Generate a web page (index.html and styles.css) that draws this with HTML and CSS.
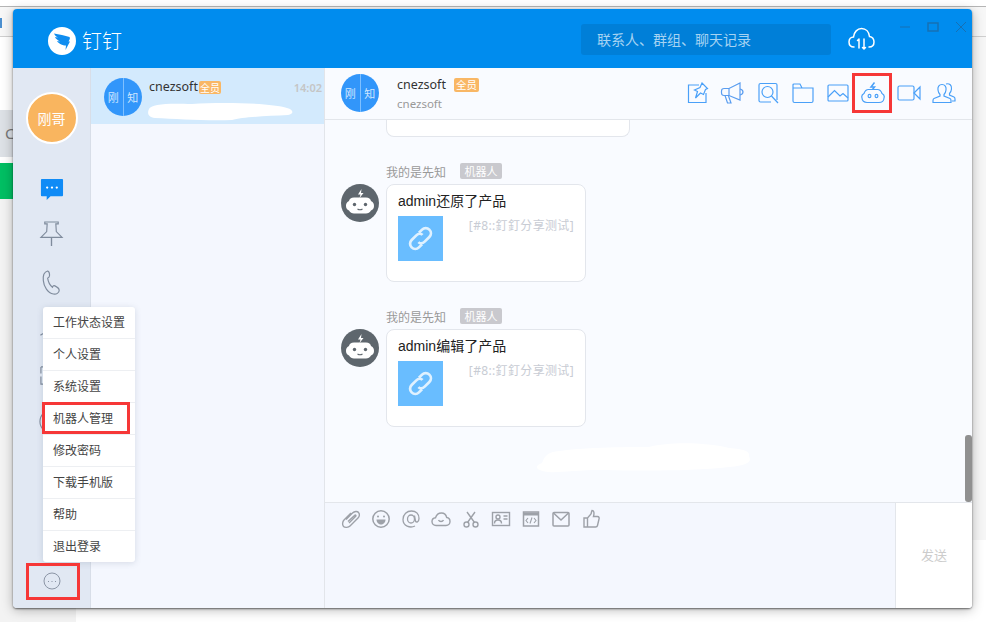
FILE: index.html
```html
<!DOCTYPE html>
<html lang="zh">
<head>
<meta charset="utf-8">
<title>钉钉</title>
<link rel="stylesheet" href="styles.css">
</head>
<body>
<div class="desktop">
  <div class="bg-top-line"></div>
  <div class="bg-band"></div>
  <div class="bg-tick"></div>
  <div class="bg-grey">C</div>
  <div class="bg-green"></div>
  <div class="bg-left"></div>
  <div class="bg-right"></div>

  <div class="window">
    <header class="titlebar">
      <div class="brand">
        <svg class="logo" viewBox="0 0 28 28"><circle cx="14" cy="14" r="14" fill="#fff"/><path d="M6 6.500 C11 7.500 17 8.500 21.500 10 C22.500 11 21.500 13 20.500 14.500 L22 14.500 L17.500 23 L18 18.500 C14.500 18.500 10.500 16.500 9 14 L12 14.500 C9.500 13 7.500 11.500 7 10 L10 10.500 C8 9.500 6.500 8 6 6.500 Z" fill="#0f8df0"/></svg>
        <span class="brand-name">钉钉</span>
      </div>
      <div class="search">联系人、群组、聊天记录</div>
      <svg class="cloud" viewBox="0 0 27 24" fill="none" stroke="#fff" stroke-width="1.500" stroke-linecap="round"><path d="M6 20 C2.500 20 1 17.500 1 15 C1 12 3 10 5.500 10 C6 5 9.500 1.500 13.500 1.500 C18 1.500 21 5 21.500 9.500 C24 10 26 12 26 15 C26 18 24 20 21 20"/><path d="M11 12 V21 M9.500 13.500 L11 12 M16 12 V22 M14.500 20.500 L16 22 L17.500 20.500"/></svg>
      <div class="winctl">
        <svg class="ctl-min" viewBox="0 0 12 12"><path d="M1 6 H11" stroke="#1670b4" stroke-width="1"/></svg>
        <svg class="ctl-max" viewBox="0 0 12 12"><rect x="1" y="2" width="10" height="8" fill="none" stroke="#1670b4" stroke-width="1.500"/></svg>
        <svg class="ctl-close" viewBox="0 0 12 12"><path d="M1 1 L11 11 M11 1 L1 11" stroke="#1670b4" stroke-width="1"/></svg>
      </div>
    </header>

    <div class="main">
      <nav class="sidebar">
        <div class="me"><span>刚哥</span></div>
        <div class="nav-icons">
          <div class="nav-item"><svg class="nav-svg" viewBox="0 0 26 26"><path d="M2 4 Q2 3 3 3 H24 Q25 3 25 4 V20 Q25 21 24 21 H12 L8 25 L8 21 H3 Q2 21 2 20 Z" fill="#0f8bf6"/><circle cx="8.500" cy="12" r="1.200" fill="#fff"/><circle cx="13.500" cy="12" r="1.200" fill="#fff"/><circle cx="18.500" cy="12" r="1.200" fill="#fff"/></svg></div>
          <div class="nav-item nav-up"><svg class="nav-svg" viewBox="0 0 26 26" fill="none" stroke="#7f8b9c" stroke-width="1.200"><path d="M6 1 H20 V3 H17.500 L18 11 L24 17 H2 L8 11 L8.500 3 H6 Z"/><path d="M13 17 V26" stroke-width="1.400"/></svg></div>
          <div class="nav-item"><svg class="nav-svg" viewBox="0 0 26 26" fill="none" stroke="#7f8b9c" stroke-width="1.200"><path d="M9 1 C5 2 4 6 4.500 11 C5 17 9 24 15 25 C18 25.500 21 24 21 21 C21 19 18.500 17.500 16.500 16.500 C15.500 16 14.500 16.500 14 18 C11.500 16 9.500 12 9 8.500 C10 8 11 7 11 5.500 C11 3.500 10.500 1.500 9 1 Z"/></svg></div>
          <div class="nav-item"><svg class="nav-svg" viewBox="0 0 26 26" fill="none" stroke="#7f8b9c" stroke-width="1.200"><path d="M1.500 19 C2.500 18 3.500 17.500 5 17 C8 16 10 15 13 15"/><circle cx="13" cy="9" r="5"/></svg></div>
          <div class="nav-item"><svg class="nav-svg" viewBox="0 0 26 26" fill="none" stroke="#7f8b9c" stroke-width="1.200"><path d="M2 3 V10 M2 13 V21 H24 V3 H2"/></svg></div>
          <div class="nav-item"><svg class="nav-svg" viewBox="0 0 26 26" fill="none" stroke="#7f8b9c" stroke-width="1.200"><circle cx="13" cy="11" r="12"/></svg></div>
        </div>
        <div class="more">
          <svg class="more-svg" viewBox="0 0 18 18" fill="none"><circle cx="9" cy="9" r="8" stroke="#8b95a5" stroke-width="1"/><path d="M5 9.500 H6 M8.500 9.500 H9.500 M12 9.500 H13" stroke="#8b95a5" stroke-width="1"/></svg>
        </div>
      </nav>

      <aside class="convlist">
        <div class="conv">
          <div class="dual"><span>刚</span><span>知</span></div>
          <div class="conv-body">
            <div class="conv-top">
              <span class="conv-name">cnezsoft</span><span class="badge badge-conv">全员</span>
              <span class="conv-time">14:02</span>
            </div>
          </div>
        </div>
      </aside>

      <section class="chat">
        <div class="chat-head">
          <div class="dual"><span>刚</span><span>知</span></div>
          <div class="chat-title">
            <div class="chat-title-top"><span class="chat-name">cnezsoft</span><span class="badge badge-head">全员</span></div>
            <div class="chat-sub">cnezsoft</div>
          </div>
          <div class="tools">
            <svg class="tool" viewBox="0 0 24 24" fill="none" stroke="#4aa0f8" stroke-width="1.200"><path d="M14 4 H3.500 V21.500 H21 V12"/><path d="M17 2 L22.500 7.500 L20.500 8.500 L18.500 13.500 L15.500 12 L10.500 17 L12.500 10.500 L9.500 9 L15 6.500 Z"/></svg>
            <svg class="tool" viewBox="0 0 24 24" fill="none" stroke="#5a9df0" stroke-width="1.200"><path d="M20 2 V19 L9 14.500 H4 C2 14.500 1.500 13 1.500 12 V10 C1.500 8 3 7.500 4 7.500 H9 Z"/><path d="M9 7.500 V14.500 M5 14.500 L7.500 22 H11 L8.500 15 M20 8 C22 8.500 23 9.500 23 11 C23 12.500 22 13.500 20 14"/></svg>
            <svg class="tool" viewBox="0 0 24 24" fill="none" stroke="#4aa0f8" stroke-width="1.200"><path d="M21 19 V4 Q21 2.500 19.500 2.500 H4.500 Q3 2.500 3 4 V19.500 Q3 21 4.500 21 H15"/><circle cx="11.500" cy="11" r="5.500"/><path d="M15.500 15 L22 22"/></svg>
            <svg class="tool" viewBox="0 0 24 24" fill="none" stroke="#4aa0f8" stroke-width="1.200"><path d="M2 4 V20 Q2 21.500 3.500 21.500 H20.500 Q22 21.500 22 20 V7 H11 L9 3 H3 Q2 3 2 4 Z M2 7 H11"/></svg>
            <svg class="tool" viewBox="0 0 24 24" fill="none" stroke="#4aa0f8" stroke-width="1.200"><rect x="2" y="4" width="20" height="16" rx="1"/><path d="M2 16 L8.500 9.500 L14 15 L17 12.500 L22 17"/></svg>
            <svg class="tool" viewBox="0 0 24 24" fill="none" stroke="#4aa0f8" stroke-width="1.200"><path d="M7.500 8.500 H16.500 C19.500 8.500 20.500 11 21 12.500 C23 13.500 23.500 15.500 23 17 C23 19.500 21 21.500 18 21.500 H6 C3 21.500 1 19.500 1 17 C.5 15.500 1 13.500 3 12.500 C3.500 11 4.500 8.500 7.500 8.500 Z"/><path d="M13.500 1.500 L10 6 H13.500 L11.500 8.500" stroke-width="1.500"/><ellipse cx="8.500" cy="15" rx="1.400" ry="1.700"/><ellipse cx="15.500" cy="15" rx="1.400" ry="1.700"/></svg>
            <svg class="tool" viewBox="0 0 24 24" fill="none" stroke="#4aa0f8" stroke-width="1.200"><rect x="1" y="5" width="16" height="14" rx="1.500"/><path d="M17 12 L23 6 V18 Z"/></svg>
            <svg class="tool" viewBox="0 0 24 24" fill="none" stroke="#4aa0f8" stroke-width="1.200"><path d="M10 3.500 C13 3.500 14.500 6 14 9 C13.800 11 13 12.500 12 13.500 V15 L18 17.500 Q19 18 19 19.500 V21.500 H1 V19.500 Q1 18 2 17.500 L8 15 V13.500 C7 12.500 6.200 11 6 9 C5.500 6 7 3.500 10 3.500 Z"/><path d="M14 3 C17.500 2 20 4.500 19.500 8 C19.300 10 18.500 11.500 17.500 12.500 V14 L22 16 Q23 16.500 23 18 V20 H20"/></svg>
          </div>
        </div>

        <div class="messages">
          <div class="cut-bubble"></div>

          <div class="msg">
            <div class="robot-wrap">
              <svg class="robot" viewBox="0 0 38 38"><circle cx="19" cy="19" r="19" fill="#5e666d"/><path d="M13 13.500 H25 C28 13.500 29.500 15 30 17 C32.500 18 33 20 33 22 C33 24 32 26 30 26.500 C29 28.500 27 29.500 25 29.500 H13 C11 29.500 9 28.500 8 26.500 C6 26 5 24 5 22 C5 20 5.500 18 8 17 C8.500 15 10 13.500 13 13.500 Z" fill="#fff"/><path d="M20.500 5 L17 10.500 H19.500 L18.500 14 L22.500 9 H20 Z" fill="#fff"/><circle cx="13.500" cy="20.500" r="1.700" fill="#5e666d"/><circle cx="24.500" cy="20.500" r="1.700" fill="#5e666d"/><path d="M16.500 25 Q19 26.500 21.500 25" fill="none" stroke="#5e666d" stroke-width="1.100"/></svg>
            </div>
            <div class="msg-col">
              <div class="msg-meta"><span class="msg-sender">我的是先知</span><span class="bot-tag">机器人</span></div>
              <div class="bubble">
                <div class="bubble-title">admin还原了产品</div>
                <div class="bubble-row">
                  <div class="link-tile"><svg class="link-svg" viewBox="0 0 24 24" fill="none" stroke="#dff1ff" stroke-width="2.600"><path d="M10.500 6.500 L13.500 3.500 C15.500 1.500 18.500 1.500 20.500 3.500 C22.500 5.500 22.500 8.500 20.500 10.500 L16 15 C14 17 11.500 17 10 15.500"/><path d="M13.500 17.500 L10.500 20.500 C8.500 22.500 5.500 22.500 3.500 20.500 C1.500 18.500 1.500 15.500 3.500 13.500 L8 9 C10 7 12.500 7 14 8.500"/></svg></div>
                  <div class="bubble-ref">[#8::釘釘分享测试]</div>
                </div>
              </div>
            </div>
          </div>

          <div class="msg">
            <div class="robot-wrap">
              <svg class="robot" viewBox="0 0 38 38"><circle cx="19" cy="19" r="19" fill="#5e666d"/><path d="M13 13.500 H25 C28 13.500 29.500 15 30 17 C32.500 18 33 20 33 22 C33 24 32 26 30 26.500 C29 28.500 27 29.500 25 29.500 H13 C11 29.500 9 28.500 8 26.500 C6 26 5 24 5 22 C5 20 5.500 18 8 17 C8.500 15 10 13.500 13 13.500 Z" fill="#fff"/><path d="M20.500 5 L17 10.500 H19.500 L18.500 14 L22.500 9 H20 Z" fill="#fff"/><circle cx="13.500" cy="20.500" r="1.700" fill="#5e666d"/><circle cx="24.500" cy="20.500" r="1.700" fill="#5e666d"/><path d="M16.500 25 Q19 26.500 21.500 25" fill="none" stroke="#5e666d" stroke-width="1.100"/></svg>
            </div>
            <div class="msg-col">
              <div class="msg-meta"><span class="msg-sender">我的是先知</span><span class="bot-tag">机器人</span></div>
              <div class="bubble">
                <div class="bubble-title">admin编辑了产品</div>
                <div class="bubble-row">
                  <div class="link-tile"><svg class="link-svg" viewBox="0 0 24 24" fill="none" stroke="#dff1ff" stroke-width="2.600"><path d="M10.500 6.500 L13.500 3.500 C15.500 1.500 18.500 1.500 20.500 3.500 C22.500 5.500 22.500 8.500 20.500 10.500 L16 15 C14 17 11.500 17 10 15.500"/><path d="M13.500 17.500 L10.500 20.500 C8.500 22.500 5.500 22.500 3.500 20.500 C1.500 18.500 1.500 15.500 3.500 13.500 L8 9 C10 7 12.500 7 14 8.500"/></svg></div>
                  <div class="bubble-ref">[#8::釘釘分享测试]</div>
                </div>
              </div>
            </div>
          </div>

          <div class="scrollbar"></div>
        </div>

        <div class="composer">
          <div class="composer-left">
            <div class="input-tools">
              <svg class="itool" viewBox="0 0 20 20" fill="none" stroke="#9da1a8" stroke-width="1.400"><path d="M5 10.500 L11.500 4 C13.500 2 16.500 2 17.500 3.500 C19 5 18.500 7.500 17 9 L9 17 C7.500 18.500 4 19 2.500 17.500 C1 16 1.500 12.500 3 11 L10 4"/><path d="M7 12.500 L13.500 6.500 C14.500 5.500 15.500 6.500 14.500 7.500 L8 14"/></svg>
              <svg class="itool" viewBox="0 0 20 20" fill="none" stroke="#9da1a8" stroke-width="1.500"><circle cx="10" cy="10" r="8.200"/><circle cx="7" cy="7.500" r="1" fill="#9da1a8" stroke="none"/><circle cx="13" cy="7.500" r="1" fill="#9da1a8" stroke="none"/><path d="M5.500 10.500 H14.500 C14.500 14 12 15.500 10 15.500 C8 15.500 5.500 14 5.500 10.500 Z" fill="#9da1a8" stroke="none"/></svg>
              <svg class="itool" viewBox="0 0 20 20" fill="none" stroke="#9da1a8" stroke-width="1.300"><path d="M14 17 C9 19.500 2 17 2 10.500 C2 5 6 2 10.500 2 C15 2 18 5 18 9.500 C18 13 15 14 14.500 12 L13.500 6.500"/><ellipse cx="10" cy="10" rx="3.500" ry="4"/></svg>
              <svg class="itool" viewBox="0 0 20 20" fill="none" stroke="#9da1a8" stroke-width="1.400"><path d="M5 16.500 C2.500 16.500 1 14.500 1 12.500 C1 10.500 2.500 9 4.500 8.800 C5.500 5.500 8 4 10.500 4 C13 4 15 5.500 15.700 8.500 C17.700 8.800 19 10.500 19 12.500 C19 14.500 17.500 16.500 15 16.500 Z"/><path d="M7.500 11 C8.500 13 11.500 13 12.500 11"/></svg>
              <svg class="itool" viewBox="0 0 20 20" fill="none" stroke="#9da1a8" stroke-width="1.400"><circle cx="5.500" cy="15.500" r="2.500"/><circle cx="14.500" cy="15.500" r="2.500"/><path d="M6.500 13.500 L14 3 M13.500 13.500 L6 3"/></svg>
              <svg class="itool" viewBox="0 0 20 20" fill="none" stroke="#9da1a8" stroke-width="1.400"><rect x="1.500" y="3.500" width="17" height="13"/><circle cx="7" cy="8" r="2"/><path d="M3.500 14.500 C3.500 12 5 11 7 11 C9 11 10.500 12 10.500 14.500 M12.500 7 H16.500 M12.500 10 H16.500"/></svg>
              <svg class="itool" viewBox="0 0 20 20" fill="none" stroke="#9da1a8" stroke-width="1.500"><rect x="2.500" y="3" width="15" height="14"/><path d="M2.500 5 H17.500" stroke-width="3"/><path d="M7 9 L5 11.500 L7 14 M13 9 L15 11.500 L13 14 M11 8.500 L9 14.500" stroke-width="1.100"/></svg>
              <svg class="itool" viewBox="0 0 20 20" fill="none" stroke="#9da1a8" stroke-width="1.500"><rect x="2" y="3.500" width="16" height="13.500" rx="1"/><path d="M2.500 4 L10 11 L17.500 4"/></svg>
              <svg class="itool" viewBox="0 0 20 20" fill="none" stroke="#9da1a8" stroke-width="1.400"><path d="M6.500 9 L10 5 C10.500 3.500 10.500 2.500 11 1.500 C13 1.500 13.500 4 12.500 7.500 H16.500 C18 7.500 18.500 9 18 10 L16.500 16.500 C16.300 17.500 15.500 18 14.500 18 H6.500 V9 H3 V18 H6.500"/></svg>
            </div>
          </div>
          <div class="send">发送</div>
        </div>
      </section>
    </div>
  </div>

  <svg class="scribble scribble-conv" viewBox="0 0 148 22"><path d="M2 9 C4 4 20 3 45 4 C75 2 125 3 140 8 C147 10 147 14 141 15 C120 16 95 17 85 20 C60 21 30 19 8 18 C1 17 0 13 2 9 Z" fill="#fff"/></svg>
  <svg class="scribble scribble-msg" viewBox="0 0 216 32"><path d="M19 10 C40 6 80 5 115 5 C135 0 170 0 195 6 C212 7 216 10 215 14 C218 20 214 23 195 25 C160 29 110 29 70 28 C40 28 25 31 15 30 C2 29 -1 24 8 21 C10 16 12 12 19 10 Z" fill="#fff"/></svg>

  <ul class="menu">
    <li class="menu-item">工作状态设置</li>
    <li class="menu-item">个人设置</li>
    <li class="menu-item">系统设置</li>
    <li class="menu-item">机器人管理</li>
    <li class="menu-item">修改密码</li>
    <li class="menu-item">下载手机版</li>
    <li class="menu-item">帮助</li>
    <li class="menu-item">退出登录</li>
  </ul>

  <div class="redbox redbox-tool"></div>
  <div class="redbox redbox-menu"></div>
  <div class="redbox redbox-more"></div>
</div>
</body>
</html>
```

FILE: styles.css
```css
* { box-sizing: border-box; }
html, body { margin: 0; padding: 0; }
body {
  width: 986px;
  height: 622px;
  overflow: hidden;
  background: #fff;
  font-family: "Noto Sans", "Noto Sans CJK SC", sans-serif;
  font-size: 12px;
  color: #333;
}
.desktop { position: relative; width: 986px; height: 622px; overflow: hidden; }

/* Backdrop behind the window */
.bg-top-line { position: absolute; left: 0; top: 6px; width: 986px; height: 1px; background: #b5b5b5; }
.bg-band { position: absolute; left: 0; top: 7px; width: 986px; height: 30px; background: #f7f7f7; border-bottom: 1px solid #cfcfcf; }
.bg-tick { position: absolute; left: 0; top: 18px; width: 2px; height: 10px; background: #4b8fcf; }
.bg-grey { position: absolute; left: 0; top: 110px; width: 14px; height: 47px; background: #dde1e6; color: #777; font-size: 15px; line-height: 47px; padding-left: 5px; overflow: hidden; }
.bg-green { position: absolute; left: 0; top: 163px; width: 14px; height: 36px; background: #00bf63; }
.bg-left { position: absolute; left: 0; top: 199px; width: 76px; height: 423px; background: #f3f3f3; }
.bg-right { position: absolute; left: 972px; top: 37px; width: 14px; height: 503px; background: #f6f6f6; }

/* Window */
.window {
  position: absolute;
  left: 13px;
  top: 9px;
  width: 959px;
  height: 599px;
  display: flex;
  flex-direction: column;
  border-radius: 4px;
  overflow: hidden;
  background: #f4f7fe;
  box-shadow: 0 1px 2px rgba(0,0,0,.55), 0 2px 12px rgba(0,0,0,.28);
}

/* Title bar */
.titlebar {
  height: 59px;
  flex: none;
  display: flex;
  align-items: center;
  background: #008cee;
  padding-left: 35px;
}
.brand { display: flex; align-items: center; width: 533px; gap: 6px; padding-top: 5px; }
.logo { width: 28px; height: 28px; flex: none; }
.brand-name { color: #fff; font-size: 20px; line-height: 28px; font-weight: 300; font-family: "Noto Sans CJK SC", sans-serif; }
.search {
  width: 250px;
  height: 31px;
  margin-top: 1px;
  border-radius: 3px;
  background: #007fd8;
  color: #a6d3f2;
  font-size: 14px;
  line-height: 31px;
  padding-left: 16px;
  font-family: "Noto Sans CJK SC", sans-serif;
}
.cloud { width: 27px; height: 24px; margin-left: 17px; flex: none; }
.winctl { display: flex; align-self: flex-start; margin-left: 24px; padding-top: 12px; gap: 16px; }
.ctl-min, .ctl-max, .ctl-close { width: 12px; height: 12px; display: block; }

/* Main three columns */
.main { flex: 1; display: flex; min-height: 0; }

.sidebar {
  width: 78px;
  flex: none;
  display: flex;
  flex-direction: column;
  align-items: center;
  background: #e1e8f3;
  border-right: 1px solid #d8dee8;
  padding-top: 24px;
}
.me {
  width: 52px;
  height: 52px;
  border-radius: 50%;
  background: #f9b55f;
  border: 2px solid #fff;
  color: #fff;
  font-size: 14px;
  display: flex;
  align-items: center;
  justify-content: center;
  font-family: "Noto Sans CJK SC", sans-serif;
}
.nav-icons { margin-top: 21px; display: flex; flex-direction: column; align-items: center; }
.nav-item { height: 47px; display: flex; align-items: center; justify-content: center; }
.nav-up { position: relative; top: -2px; }
.nav-svg { width: 25px; height: 25px; display: block; overflow: visible; }
.more { margin-top: auto; padding-bottom: 18px; }
.more-svg { width: 18px; height: 18px; display: block; }

/* Conversation list */
.convlist {
  width: 234px;
  flex: none;
  background: #f4f7fe;
  border-right: 1px solid #e2e5ea;
}
.conv {
  height: 56px;
  background: #d3eafd;
  display: flex;
  padding: 10px 0 0 13px;
  gap: 7px;
}
.dual {
  width: 38px;
  height: 38px;
  flex: none;
  border-radius: 50%;
  overflow: hidden;
  display: flex;
  background: #3296fa;
  color: #cfe6ff;
  font-size: 11px;
  font-family: "Noto Sans CJK SC", sans-serif;
}
.dual span { flex: 1; display: flex; align-items: center; justify-content: center; }
.dual span:first-child { border-right: 1px solid #7fc0ff; }
.conv-body { flex: 1; min-width: 0; }
.conv-top { display: flex; align-items: center; height: 18px; }
.conv-name { font-size: 12.500px; color: #333; line-height: 18px; }
.badge {
  background: #f9b765;
  color: #fff;
  border-radius: 2px;
  font-family: "Noto Sans CJK SC", sans-serif;
  text-align: center;
}
.badge-conv { width: 22px; height: 13px; font-size: 10px; line-height: 13px; margin-left: 1px; }
.conv-time { margin-left: auto; margin-right: 2px; color: #c5c5c5; font-size: 11px; font-weight: 600; }

/* Chat panel */
.chat { flex: 1; min-width: 0; display: flex; flex-direction: column; background: #f9fbff; }
.chat-head {
  height: 52px;
  flex: none;
  display: flex;
  align-items: center;
  padding: 6px 16px 7px 16px;
  border-bottom: 1px solid #e3e6eb;
}
.chat-head .dual { margin-top: -1px; }
.chat-title { margin-left: 18px; margin-top: 2px; }
.chat-title-top { display: flex; align-items: center; height: 18px; }
.chat-name { font-size: 12.500px; color: #333; line-height: 18px; }
.badge-head { width: 25px; height: 14px; font-size: 10.500px; line-height: 14px; margin-left: 8px; }
.chat-sub { color: #999; font-size: 11.500px; line-height: 16px; margin-top: 2px; }
.tools { margin-left: auto; display: flex; gap: 11.300px; }
.tool { width: 24px; height: 24px; display: block; }

.messages { flex: 1; min-height: 0; position: relative; padding-left: 16px; overflow: hidden; }
.cut-bubble {
  width: 244px;
  height: 17px;
  margin-left: 45px;
  margin-bottom: 26px;
  background: #fff;
  border: 1px solid #e3e6ec;
  border-top: 0;
  border-radius: 0 0 8px 8px;
}
.msg { display: flex; margin-bottom: 26px; }
.robot-wrap { width: 45px; flex: none; padding-top: 21px; }
.robot { width: 38px; height: 38px; display: block; }
.msg-col { display: flex; flex-direction: column; }
.msg-meta { display: flex; align-items: center; height: 16px; margin-bottom: 5px; font-family: "Noto Sans CJK SC", sans-serif; }
.msg-sender { color: #999; font-size: 12px; width: 74px; }
.bot-tag {
  width: 42px;
  height: 16px;
  background: #c9c9ce;
  border-radius: 2px;
  color: #fff;
  font-size: 11px;
  line-height: 16px;
  text-align: center;
}
.bubble {
  width: 200px;
  height: 98px;
  background: #fff;
  border: 1px solid #e3e6ec;
  border-radius: 8px;
  padding: 6px 11px 0 11px;
}
.bubble-title { font-family: "Liberation Sans", "Noto Sans CJK SC", sans-serif; font-size: 14px; line-height: 20px; color: #222; height: 25px; }
.bubble-row { display: flex; justify-content: space-between; }
.link-tile { width: 45px; height: 45px; background: #69bdff; display: flex; align-items: center; justify-content: center; flex: none; }
.link-svg { width: 25px; height: 25px; display: block; }
.bubble-ref { color: #c8ccd4; font-size: 12px; line-height: 20px; letter-spacing: .35px; white-space: nowrap; }
.scrollbar {
  position: absolute;
  right: 0;
  bottom: 0;
  width: 7px;
  height: 67px;
  background: #909090;
  border-radius: 3px;
}

.composer {
  height: 106px;
  flex: none;
  display: flex;
  background: #f4f7fe;
  border-top: 1px solid #e3e6eb;
}
.composer-left { flex: 1; padding: 6px 0 0 16px; }
.input-tools { display: flex; gap: 10px; }
.itool { width: 20px; height: 20px; display: block; }
.send {
  width: 77px;
  flex: none;
  background: #fff;
  border-left: 1px solid #e3e6eb;
  color: #ccc;
  font-size: 13px;
  padding-bottom: 2px;
  display: flex;
  align-items: center;
  justify-content: center;
  font-family: "Noto Sans CJK SC", sans-serif;
}

/* Overlays */
.scribble { position: absolute; display: block; }
.scribble-conv { left: 147px; top: 100px; width: 148px; height: 22px; }
.scribble-msg { left: 534px; top: 442px; width: 216px; height: 32px; }

.menu {
  position: absolute;
  left: 43px;
  top: 307px;
  width: 92px;
  margin: 0;
  padding: 0;
  list-style: none;
  background: #fff;
  border-radius: 3px;
  box-shadow: 0 1px 6px rgba(90,105,130,.2);
  font-family: "Noto Sans CJK SC", sans-serif;
}
.menu-item {
  height: 32px;
  line-height: 29px;
  padding-left: 10px;
  font-size: 12px;
  color: #444;
  border-bottom: 1px solid #edeff2;
}
.menu-item:last-child { border-bottom: 0; height: 31px; }

.redbox { position: absolute; border: 3px solid #f63737; }
.redbox-tool { left: 852px; top: 73px; width: 40px; height: 40px; }
.redbox-menu { left: 42px; top: 402px; width: 88px; height: 32px; }
.redbox-more { left: 26px; top: 563px; width: 54px; height: 37px; }
```
